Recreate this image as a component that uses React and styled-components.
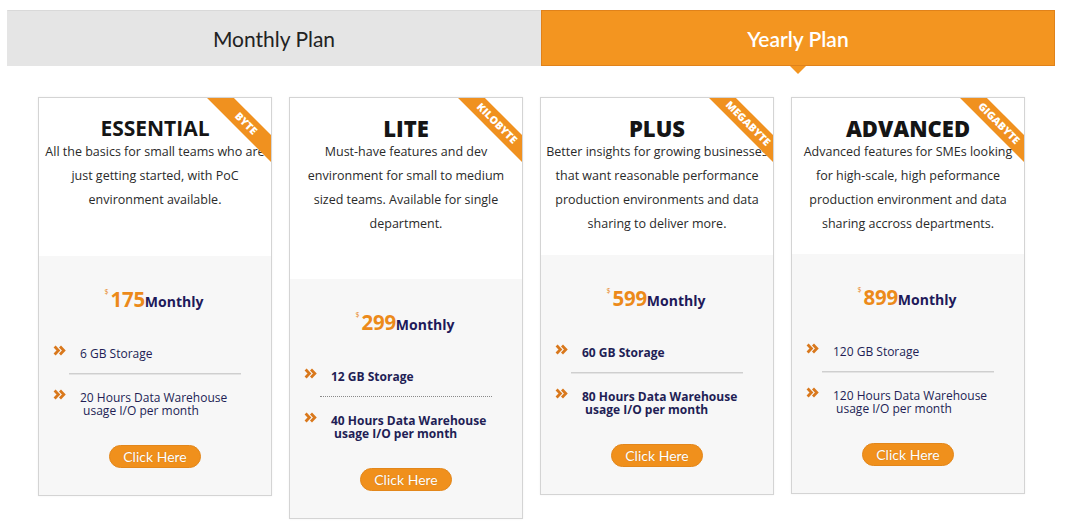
import React from 'react';
import styled, { createGlobalStyle } from 'styled-components';

const GlobalStyle = createGlobalStyle`
  body {
    margin: 0;
    background: #fff;
    font-family: "Open Sans", sans-serif;
  }
`;

const Page = styled.div`
  width: 1070px;
  height: 528px;
  overflow: hidden;
`;

const Tabs = styled.div`
  display: flex;
  padding: 10px 0 0 7px;
`;

const Tab = styled.div`
  position: relative;
  box-sizing: border-box;
  width: ${(p) => p.$width}px;
  height: 56px;
  display: flex;
  align-items: center;
  justify-content: center;
  font-family: Lato, sans-serif;
  font-size: 21px;
  font-weight: ${(p) => (p.$active ? 600 : 400)};
  color: ${(p) => (p.$active ? '#fff' : '#222')};
  background: ${(p) => (p.$active ? '#f39520' : '#e5e5e5')};
  border: 1px solid ${(p) => (p.$active ? '#e0821a' : '#e5e5e5')};
  border-top-color: ${(p) => (p.$active ? '#e0821a' : '#d9d9d9')};

  &::after {
    content: '';
    display: ${(p) => (p.$active ? 'block' : 'none')};
    position: absolute;
    left: 50%;
    bottom: -9px;
    transform: translateX(-50%);
    border-left: 8px solid transparent;
    border-right: 8px solid transparent;
    border-top: 8px solid #f39520;
  }
`;

const Cards = styled.div`
  display: flex;
  align-items: flex-start;
  gap: 17px;
  padding: 31px 0 0 38px;
`;

const Card = styled.div`
  position: relative;
  box-sizing: border-box;
  width: 234px;
  border: 1px solid #d4d4d4;
  background: #fff;
  box-shadow: 0 0 2px rgba(0, 0, 0, 0.06);
`;

const Top = styled.div`
  box-sizing: border-box;
  height: ${(p) => p.$height}px;
  padding: 18px 4px 0;
  text-align: center;
`;

const Title = styled.h2`
  margin: 0;
  font-size: ${(p) => (p.$heavy ? 22 : 21)}px;
  line-height: 24px;
  font-weight: ${(p) => (p.$heavy ? 800 : 700)};
  color: #151515;
`;

const Desc = styled.p`
  margin: 0;
  font-size: 12.5px;
  line-height: 24px;
  color: #2a2a2a;
  white-space: nowrap;

  span {
    display: block;
  }
`;

const RibbonBox = styled.div`
  position: absolute;
  top: 0;
  right: 0;
  width: 70px;
  height: 70px;
  overflow: hidden;
`;

const Ribbon = styled.span`
  position: absolute;
  left: -5px;
  top: 16px;
  width: 100px;
  height: 19px;
  line-height: 19px;
  transform: rotate(45deg);
  background: #f0911f;
  color: #fff;
  font-size: 10.5px;
  font-weight: 800;
  text-align: center;
  letter-spacing: 0.1px;
`;

const Bottom = styled.div`
  box-sizing: border-box;
  height: 239px;
  padding-top: 31px;
  background: #f7f7f7;
  display: flex;
  flex-direction: column;
`;

const Price = styled.div`
  display: flex;
  justify-content: center;
  align-items: baseline;
  height: 24px;
  line-height: 24px;
  padding-right: 2px;
`;

const Dollar = styled.sup`
  align-self: flex-start;
  font-size: 7px;
  line-height: 10px;
  color: #e8891a;
  margin-right: 2px;
`;

const Amount = styled.span`
  font-size: 20.5px;
  font-weight: 700;
  color: #ec8a1a;
  letter-spacing: -0.3px;
`;

const Period = styled.span`
  font-size: 14px;
  font-weight: 700;
  color: #1e1a5a;
`;

const Feature = styled.div`
  display: flex;
  align-items: flex-start;
  gap: 14px;
  padding-left: 14px;
  margin-top: ${(p) => p.$top}px;
  font-size: 12px;
  line-height: 13px;
  font-weight: ${(p) => (p.$bold ? 700 : 400)};
  color: #221e55;
`;

const FeatureText = styled.div`
  padding-top: 1px;
  white-space: pre;
`;

const Separator = styled.div`
  margin: 13px 30px 0 30px;
  border-top: 1px ${(p) => (p.$dotted ? 'dotted #8a8a8a' : 'solid #cfcfcf')};
  height: 1px;
  ${(p) => (p.$dotted ? '' : 'background: #e4e4e4;')}
`;

const Button = styled.button`
  align-self: center;
  margin-top: 28px;
  width: 92px;
  height: 23px;
  padding: 0;
  border: 1px solid #e3871b;
  border-radius: 12px;
  background: #f0901c;
  color: #fff;
  font-family: Lato, sans-serif;
  font-size: 14px;
  text-shadow: 0 0 1px rgba(120, 60, 0, 0.35);
  cursor: pointer;
`;

const Chevrons = () => (
  <svg width="13" height="11" viewBox="0 0 13 11" style={{ flex: 'none', marginTop: '-1px' }}>
    <path
      d="M1.6 1.6 L5.4 5.5 L1.6 9.4 M7 1.6 L10.8 5.5 L7 9.4"
      fill="none"
      stroke="#d9781c"
      strokeWidth="2.8"
    />
  </svg>
);

const plans = [
  {
    name: 'ESSENTIAL',
    tag: 'BYTE',
    heavy: false,
    top: 158,
    desc: ['All the basics for small teams who are', 'just getting started, with PoC', 'environment available.'],
    price: '175',
    storage: '6 GB Storage',
    hours: '20 Hours Data Warehouse\n usage I/O per month',
    bold: false,
    dotted: false,
  },
  {
    name: 'LITE',
    tag: 'KILOBYTE',
    heavy: true,
    top: 181,
    desc: ['Must-have features and dev', 'environment for small to medium', 'sized teams. Available for single', 'department.'],
    price: '299',
    storage: '12 GB Storage',
    hours: '40 Hours Data Warehouse\n usage I/O per month',
    bold: true,
    dotted: true,
  },
  {
    name: 'PLUS',
    tag: 'MEGABYTE',
    heavy: true,
    top: 157,
    desc: ['Better insights for growing businesses', 'that want reasonable performance', 'production environments and data', 'sharing to deliver more.'],
    price: '599',
    storage: '60 GB Storage',
    hours: '80 Hours Data Warehouse\n usage I/O per month',
    bold: true,
    dotted: false,
  },
  {
    name: 'ADVANCED',
    tag: 'GIGABYTE',
    heavy: true,
    top: 156,
    desc: ['Advanced features for SMEs looking', 'for high-scale, high peformance', 'production environment and data', 'sharing accross departments.'],
    price: '899',
    storage: '120 GB Storage',
    hours: '120 Hours Data Warehouse\n usage I/O per month',
    bold: false,
    dotted: false,
  },
];

function PlanCard({ plan }) {
  return (
    <Card>
      <Top $height={plan.top}>
        <Title $heavy={plan.heavy}>{plan.name}</Title>
        <Desc>
          {plan.desc.map((line) => (
            <span key={line}>{line}</span>
          ))}
        </Desc>
      </Top>
      <RibbonBox>
        <Ribbon>{plan.tag}</Ribbon>
      </RibbonBox>
      <Bottom>
        <Price>
          <Dollar>$</Dollar>
          <Amount>{plan.price}</Amount>
          <Period>Monthly</Period>
        </Price>
        <Feature $top={35} $bold={plan.bold}>
          <Chevrons />
          <FeatureText>{plan.storage}</FeatureText>
        </Feature>
        <Separator $dotted={plan.dotted} />
        <Feature $top={15} $bold={plan.bold}>
          <Chevrons />
          <FeatureText>{plan.hours}</FeatureText>
        </Feature>
        <Button>Click Here</Button>
      </Bottom>
    </Card>
  );
}

export default function App() {
  return (
    <Page>
      <GlobalStyle />
      <Tabs>
        <Tab $width={534}>Monthly Plan</Tab>
        <Tab $width={514} $active>
          Yearly Plan
        </Tab>
      </Tabs>
      <Cards>
        {plans.map((plan) => (
          <PlanCard key={plan.name} plan={plan} />
        ))}
      </Cards>
    </Page>
  );
}
